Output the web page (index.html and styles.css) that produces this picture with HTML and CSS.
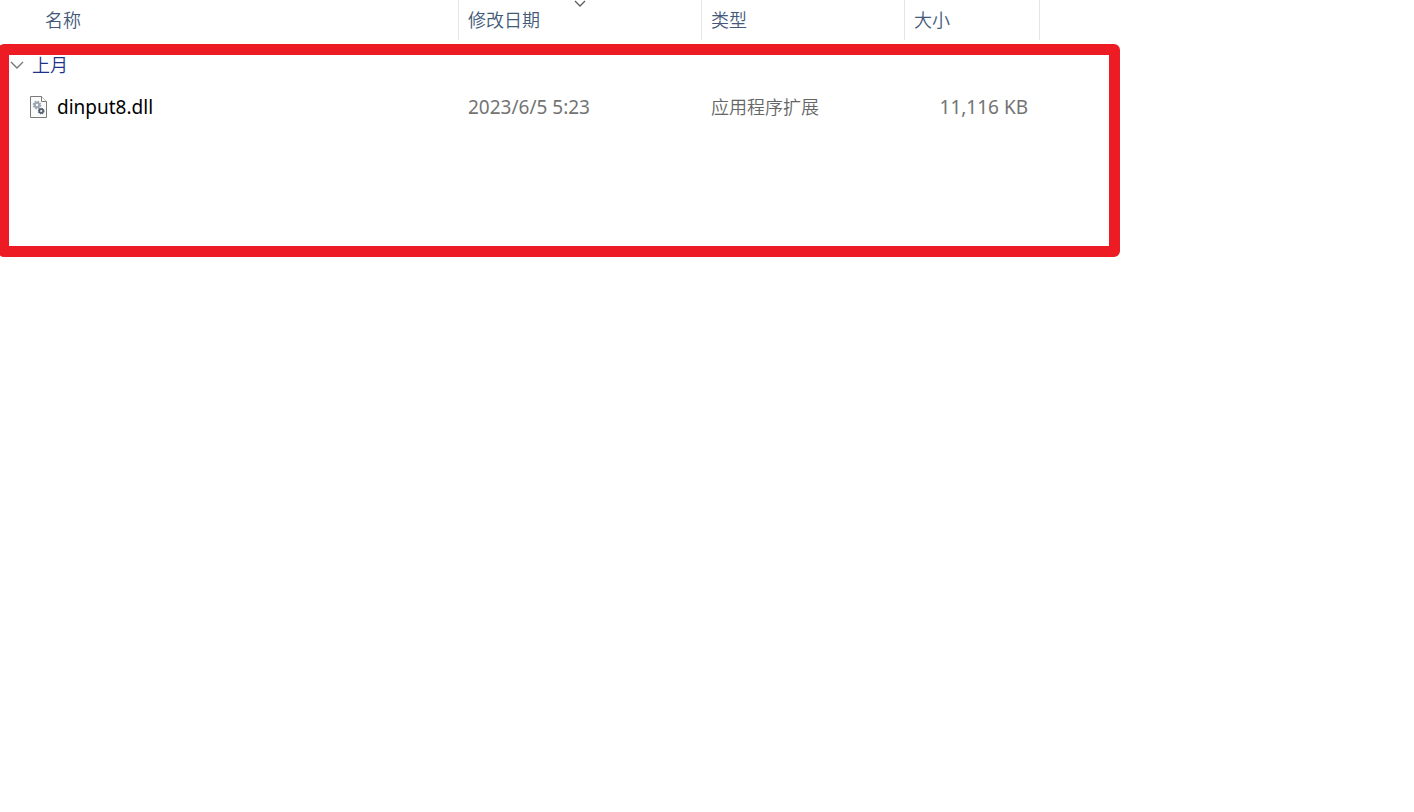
FILE: index.html
```html
<!DOCTYPE html>
<html lang="zh-CN">
<head>
<meta charset="utf-8">
<title>dinput8.dll</title>
<link rel="stylesheet" href="styles.css">
</head>
<body>
<main class="file-list">
  <table class="files">
    <colgroup>
      <col class="col-name"><col class="col-date"><col class="col-type"><col class="col-size">
    </colgroup>
    <thead>
      <tr>
        <th class="name-head" scope="col">名称</th>
        <th scope="col" aria-sort="descending">修改日期
          <svg class="sort-mark" viewBox="0 0 12 8" aria-hidden="true"><path d="M1 1l5 5 5-5"/></svg>
        </th>
        <th scope="col">类型</th>
        <th scope="col">大小</th>
      </tr>
    </thead>
    <tbody>
      <tr class="group-row">
        <td colspan="4">
          <button class="group-toggle" type="button" aria-expanded="true">
            <svg class="chevron" viewBox="0 0 14 8" aria-hidden="true"><path d="M1 1l6 6 6-6"/></svg>
            上月
          </button>
        </td>
      </tr>
      <tr class="file-row">
        <td class="name-cell">
          <div class="file-name">
            <svg class="file-icon" viewBox="0 0 18 22" aria-hidden="true">
              <path class="sheet" d="M.5.5h11l5 5v16H.5z"/>
              <path class="fold" d="M11.5.5v5h5"/>
              <circle class="teeth-light" cx="7" cy="9" r="3.4"/>
              <circle class="gear-light" cx="7" cy="9" r="2.2"/>
              <circle class="teeth-dark" cx="11.2" cy="15" r="2.8"/>
              <circle class="gear-dark" cx="11.2" cy="15" r="1.9"/>
            </svg>
            <span>dinput8.dll</span>
          </div>
        </td>
        <td class="date-cell">2023/6/5 5:23</td>
        <td>应用程序扩展</td>
        <td class="size-cell">11,116 KB</td>
      </tr>
    </tbody>
  </table>
  <div class="highlight"></div>
</main>
</body>
</html>
```
FILE: styles.css
```css
body {
  margin: 0;
  background: #fff;
  color: #666;
  font: 18px/24px "Noto Sans", "Noto Sans CJK SC", sans-serif;
}

.file-list {
  position: relative;
  min-height: 100vh;
}

.files {
  width: 1040px;
  table-layout: fixed;
  border-collapse: separate;
  border-spacing: 0;
}

.col-name { width: 459px; }
.col-date { width: 243px; }
.col-type { width: 203px; }

.files th,
.files td {
  padding: 0 0 0 9px;
  font-weight: 350;
  text-align: left;
  white-space: nowrap;
}

.files th {
  position: relative;
  height: 40px;
  border-right: 1px solid #e5e5e5;
  box-sizing: border-box;
  color: #43597a;
}

.files .name-head {
  padding-left: 45px;
}

.sort-mark {
  position: absolute;
  top: 0;
  left: 50%;
  width: 12px;
  height: 8px;
  margin-left: -6px;
  fill: none;
  stroke: #5c5c5c;
  stroke-width: 1.3;
}

.files .group-row td {
  height: 50px;
  padding-left: 10px;
}

.group-toggle {
  display: flex;
  align-items: center;
  gap: 8px;
  padding: 0;
  border: 0;
  background: none;
  color: #1e3287;
  font: inherit;
}

.chevron {
  width: 14px;
  height: 8px;
  fill: none;
  stroke: #777;
  stroke-width: 1.4;
}

.file-row td {
  height: 34px;
}

.files .name-cell,
.files .date-cell,
.files .size-cell {
  font-size: 19px;
  font-weight: 400;
}

.files .name-cell {
  padding-left: 30px;
  color: #000;
}

.files .date-cell,
.files .size-cell {
  color: #737373;
}

.file-name {
  display: flex;
  align-items: center;
  gap: 9px;
}

.file-icon {
  width: 18px;
  height: 22px;
  fill: none;
}

.sheet { fill: #fafafa; stroke: #7a7a7a; }
.fold { fill: #fff; stroke: #7a7a7a; }
.teeth-light { stroke: #9ca6b2; stroke-width: 1.8; stroke-dasharray: 1.6 1.07; }
.gear-light { stroke: #9ca6b2; stroke-width: 2; }
.teeth-dark { stroke: #56616e; stroke-width: 1.1; stroke-dasharray: 1.3 .9; }
.gear-dark { stroke: #56616e; stroke-width: 1.7; }

.files .size-cell {
  padding: 0 12px 0 0;
  text-align: right;
}

/* Red marker box drawn over the list */
.highlight {
  position: absolute;
  top: 44px;
  left: -2px;
  width: 1122px;
  height: 213px;
  box-sizing: border-box;
  border: 11px solid #ed1c24;
  border-radius: 6px;
  pointer-events: none;
}
```
